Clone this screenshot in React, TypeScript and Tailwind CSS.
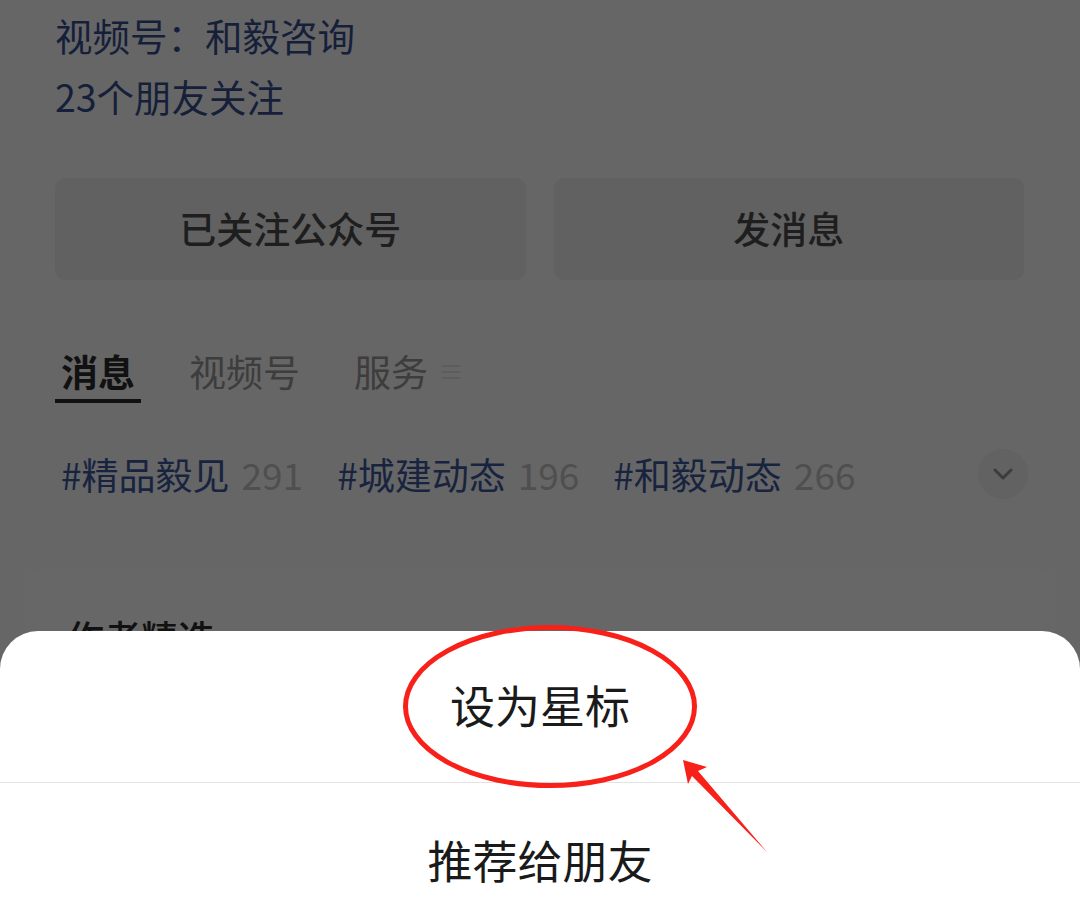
import React from 'react';

const tags = [
  { name: '#精品毅见', count: 291 },
  { name: '#城建动态', count: 196 },
  { name: '#和毅动态', count: 266 },
];

const tabs = ['消息', '视频号', '服务'];

export default function App() {
  return (
    <div
      className="relative w-[1080px] h-[901px] overflow-hidden bg-[#666666] text-[37px]"
      style={{ fontFamily: '"Noto Sans CJK SC", "Noto Sans", sans-serif' }}
    >
      {/* Dimmed profile page */}
      <div className="pl-[55px] pr-[56px]">
        <p className="mt-[11px] leading-[48px] text-[37.5px] text-[#161f3a]">视频号：和毅咨询</p>
        <p className="mt-[13px] leading-[48px] text-[37.5px] text-[#161f3a]">23个朋友关注</p>

        <div className="mt-[58px] flex gap-[28px]">
          <div className="flex-1 h-[102px] rounded-[10px] bg-[#616161] flex items-center justify-center font-medium text-[#1e1e1e]">
            已关注公众号
          </div>
          <div className="flex-1 h-[102px] rounded-[10px] bg-[#616161] flex items-center justify-center font-medium text-[#1e1e1e]">
            发消息
          </div>
        </div>

        {/* Tabs */}
        <div className="mt-[67px] flex gap-[42px] leading-[48px]">
          {tabs.map((t, i) => (
            <div key={t} className="flex flex-col items-stretch">
              <div className={`px-[6px] flex items-center ${i === 0 ? 'font-bold text-[#111111]' : 'text-[#3d3d3d]'}`}>
                {t}
                {i === 2 && <span className="ml-[10px] text-[26px] text-[#5c5c5c]">≡</span>}
              </div>
              {i === 0 && <div className="mt-[4px] h-[4px] bg-[#111111]" />}
            </div>
          ))}
        </div>

        {/* Tags */}
        <div className="mt-[46px] flex items-center gap-[34px] leading-[48px] pl-[6px] mr-[-4px]">
          {tags.map((t) => (
            <div key={t.name} className="flex items-baseline">
              <span className="text-[#18243f]">{t.name}</span>
              <span className="ml-[12px] text-[#4f4f4f]">{t.count}</span>
            </div>
          ))}
          <div className="ml-auto w-[50px] h-[50px] rounded-full bg-[#626262] flex items-center justify-center">
            <svg width="22" height="14" viewBox="0 0 22 14" fill="none">
              <path d="M3 3l8 8 8-8" stroke="#3c3c3c" strokeWidth="3" strokeLinecap="round" strokeLinejoin="round" />
            </svg>
          </div>
        </div>
      </div>

      {/* Card behind the sheet */}
      <div className="mx-[25px] mt-[71px] h-[200px] rounded-t-[12px] border border-[#686868] bg-[#676767] pt-[42px] pl-[41px]">
        <p className="leading-[48px] font-medium text-[#111111]">作者精选</p>
      </div>

      {/* Bottom sheet */}
      <div className="absolute left-0 right-0 top-[631px] h-[320px] rounded-t-[38px] bg-white text-[45px] text-[#1a1a1a]">
        <div className="h-[151px] flex items-center justify-center pb-[3px]">设为星标</div>
        <div className="h-px bg-[#e2e2e2]" />
        <div className="h-[154px] flex items-center justify-center">推荐给朋友</div>
      </div>

      {/* Red annotation */}
      <svg className="absolute inset-0 pointer-events-none" width="1080" height="901" viewBox="0 0 1080 901">
        <ellipse cx="550" cy="706.5" rx="144.5" ry="79" fill="none" stroke="#f8211a" strokeWidth="5" />
        <polygon points="683,760 707,767 698,771 767,852 692,776 688,784" fill="#f8211a" />
      </svg>
    </div>
  );
}
